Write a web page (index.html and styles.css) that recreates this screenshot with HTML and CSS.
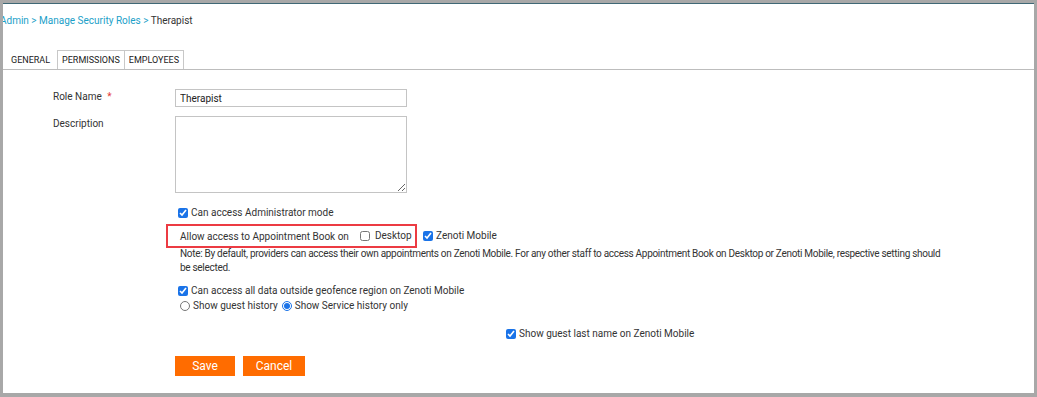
FILE: index.html
```html
<!DOCTYPE html>
<html lang="en">
<head>
  <meta charset="UTF-8" />
  <title>Manage Security Roles - Therapist</title>
  <link rel="stylesheet" href="styles.css">
</head>
<body>

<div class="panel">
  <div class="breadcrumb">
    <a href="#">Admin</a> &gt; <a href="#">Manage Security Roles</a> &gt; <span>Therapist</span>
  </div>

  <ul class="tabs">
    <li class="active">GENERAL</li>
    <li>PERMISSIONS</li>
    <li>EMPLOYEES</li>
  </ul>

  <div class="form">
    <label class="label" for="roleName">Role Name <span class="req">*</span></label>
    <div class="field">
      <input type="text" id="roleName" value="Therapist">
    </div>

    <label class="label" for="desc">Description</label>
    <div class="field">
      <textarea id="desc"></textarea>
    </div>

    <div class="label"></div>
    <div class="field options">
      <label class="check admin-mode"><input type="checkbox" checked> Can access Administrator mode</label>

      <div class="appt-row">
        <div class="appt-box">
          <span>Allow access to Appointment Book on</span>
          <label class="check"><input type="checkbox"> Desktop</label>
        </div>
        <label class="check"><input type="checkbox" checked> Zenoti Mobile</label>
      </div>

      <p class="note">Note: By default, providers can access their own appointments on Zenoti Mobile. For any other staff to access Appointment Book on Desktop or Zenoti Mobile, respective setting should be selected.</p>

      <label class="check geofence"><input type="checkbox" checked> Can access all data outside geofence region on Zenoti Mobile</label>

      <div class="radios">
        <label class="radio"><input type="radio" name="history"> Show guest history</label>
        <label class="radio"><input type="radio" name="history" checked> Show Service history only</label>
      </div>

      <label class="check last-name"><input type="checkbox" checked> Show guest last name on Zenoti Mobile</label>

      <div class="actions">
        <button class="btn">Save</button>
        <button class="btn cancel">Cancel</button>
      </div>
    </div>
  </div>
</div>

</body>
</html>
```

FILE: styles.css
```css
* {
  margin: 0;
  padding: 0;
  box-sizing: border-box;
}

html, body {
  height: 100%;
}

body {
  font-family: Roboto, "Liberation Sans", sans-serif;
  font-size: 10px;
  color: #333;
  background: #a8a8a8;
  padding: 3px 3px 4px 3px;
}

.panel {
  background: #fff;
  height: 100%;
  border-top: 1px solid #3f6876;
  overflow: hidden;
}

.breadcrumb {
  margin-left: -3px;
  padding-top: 10px;
  height: 46px;
  line-height: 14px;
  color: #1ba0c8;
}

.breadcrumb a {
  color: #1ba0c8;
  text-decoration: none;
}

.breadcrumb span {
  color: #333;
}

.tabs {
  list-style: none;
  display: flex;
  border-bottom: 1px solid #bdbdbd;
  height: 20px;
}

.tabs li {
  font-size: 9px;
  color: #222;
  line-height: 19px;
  padding: 0 4px;
  border: 1px solid #c8c8c8;
  border-bottom: none;
  margin-left: -1px;
}

.tabs li.active {
  padding: 0 7px;
  border-color: #fff #c8c8c8 #fff #fff;
  margin-left: 0;
}

.form {
  display: grid;
  grid-template-columns: 122px 810px;
  padding-left: 50px;
  padding-top: 19px;
}

.label {
  padding-top: 1px;
  line-height: 14px;
  color: #333;
}

.req {
  color: #e53935;
  margin-left: 3px;
}

.field {
  margin-bottom: 9px;
}

input[type="text"] {
  width: 232px;
  height: 18px;
  border: 1px solid #c4c4c4;
  padding: 0 4px;
  font-family: inherit;
  font-size: 10px;
  color: #222;
  outline: none;
}

textarea {
  display: block;
  width: 232px;
  height: 77px;
  border: 1px solid #c4c4c4;
  resize: both;
  outline: none;
}

.options {
  display: flex;
  flex-direction: column;
  align-items: flex-start;
  margin-top: 4px;
}

.check,
.radio {
  display: flex;
  align-items: center;
  line-height: 14px;
  white-space: nowrap;
  color: #333;
}

.check input {
  width: 10px;
  height: 10px;
  margin: 0 3px 0 3px;
  accent-color: #1a73e8;
}

.radio input {
  width: 10px;
  height: 10px;
  margin: 0 3px 0 5px;
  accent-color: #1a73e8;
}

.appt-row {
  display: flex;
  align-items: center;
  margin-top: 4px;
  margin-left: -9px;
}

.appt-box {
  display: flex;
  align-items: center;
  flex-shrink: 0;
  white-space: nowrap;
  height: 24px;
  width: 251px;
  border: 2px solid #ec3b43;
  padding-left: 12px;
  margin-right: 3px;
}

.appt-box span {
  margin-right: 8px;
}

.appt-box .check input {
  margin-right: 5px;
}

.note {
  width: 772px;
  line-height: 14px;
  letter-spacing: -0.3px;
  padding-left: 5px;
  margin-top: -1px;
}

.geofence {
  margin-top: 9px;
}

.radios {
  display: flex;
  align-items: center;
  margin-top: 1px;
}

.radios .radio + .radio input {
  margin-left: 4px;
}

.last-name {
  margin-top: 14px;
  margin-left: 328px;
}

.actions {
  display: flex;
  gap: 8px;
  margin-top: 15px;
}

.btn {
  height: 20px;
  width: 60px;
  background: #ff6c00;
  color: #fff;
  border: none;
  font-family: inherit;
  font-size: 12px;
  cursor: pointer;
}

.btn.cancel {
  width: 62px;
}
```
